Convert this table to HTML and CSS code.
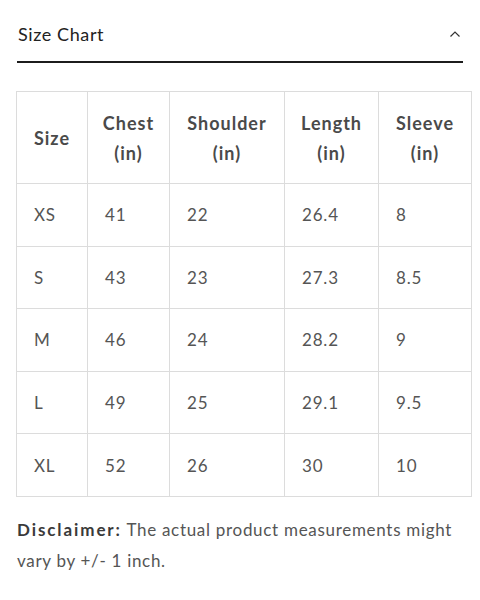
FILE: index.html
```html
<!DOCTYPE html>
<html>
<head>
<meta charset="utf-8">
<link rel="stylesheet" href="styles.css">
</head>
<body>
<div class="panel">
  <div class="summary">
    <span class="title">Size Chart</span>
    <svg class="caret" width="12" height="8" viewBox="0 0 12 8"><path d="M1.5 6.5 L6 2 L10.5 6.5" fill="none" stroke="#333" stroke-width="1.2"/></svg>
  </div>
  <div class="content">
    <table class="chart">
      <colgroup>
        <col class="c1"><col class="c2"><col class="c3"><col class="c4"><col class="c5">
      </colgroup>
      <thead>
        <tr><th>Size</th><th>Chest<br>(in)</th><th>Shoulder<br>(in)</th><th>Length<br>(in)</th><th>Sleeve<br>(in)</th></tr>
      </thead>
      <tbody>
        <tr><td>XS</td><td>41</td><td>22</td><td>26.4</td><td>8</td></tr>
        <tr><td>S</td><td>43</td><td>23</td><td>27.3</td><td>8.5</td></tr>
        <tr><td>M</td><td>46</td><td>24</td><td>28.2</td><td>9</td></tr>
        <tr><td>L</td><td>49</td><td>25</td><td>29.1</td><td>9.5</td></tr>
        <tr><td>XL</td><td>52</td><td>26</td><td>30</td><td>10</td></tr>
      </tbody>
    </table>
    <p class="note"><strong>Disclaimer:</strong> The actual product measurements might vary by +/- 1 inch.</p>
  </div>
</div>
</body>
</html>
```
FILE: styles.css
```css
html, body { margin: 0; padding: 0; background: #fff; }
body { font-family: "Lato", "Noto Sans", sans-serif; color: #555; }
.panel { padding: 0 17px 0 17px; }
.summary {
  display: flex; align-items: center; justify-content: space-between;
  height: 61px; border-bottom: 2px solid #1c1c1c;
  padding: 0 2px 0 1px;
}
.title { font-size: 18px; color: #222; letter-spacing: 0.6px; margin-top: 7px; }
.caret { margin-top: 6px; }
.content { padding-top: 28px; }
.chart {
  border-collapse: collapse; width: 455px; margin-left: -1px;
  table-layout: fixed; font-size: 17px; letter-spacing: 0.8px;
}
.c1 { width: 71px; } .c2 { width: 82px; } .c3 { width: 115px; } .c4 { width: 94px; } .c5 { width: 93px; }
.chart th, .chart td { border: 1px solid #dcdcdc; }
.chart th {
  height: 91px; font-weight: 700; color: #4a4a4a; text-align: center;
  line-height: 30px; padding: 0; font-size: 18px; letter-spacing: 1px;
}
.chart td { height: 61.6px; padding: 0 0 0 17px; color: #555; text-align: left; }
.note { margin: 17px 0 0 0; font-size: 17px; line-height: 31px; color: #555; letter-spacing: 0.7px; }
.note strong { color: #3a3a3a; font-weight: 700; letter-spacing: 1.9px; }
```
